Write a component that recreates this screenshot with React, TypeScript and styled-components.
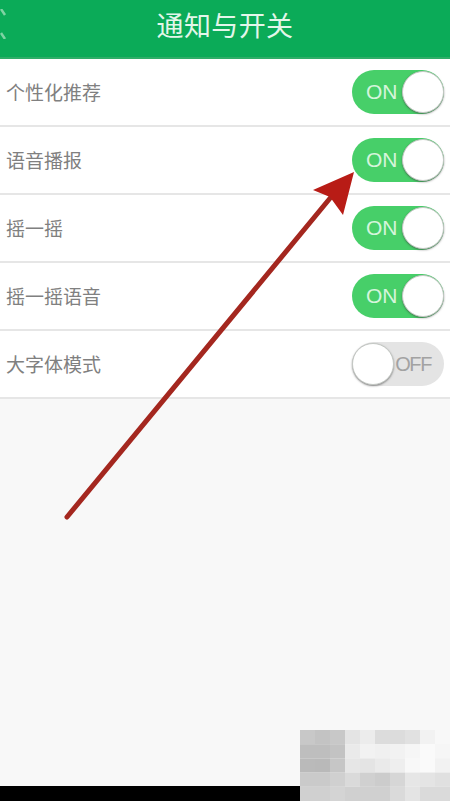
import React from "react"
import styled, { createGlobalStyle } from "styled-components"

const GlobalStyle = createGlobalStyle`
  html, body {
    margin: 0;
    padding: 0;
    background: #f8f8f8;
  }
`

const Screen = styled.div`
  position: relative;
  width: 450px;
  height: 801px;
  overflow: hidden;
  display: flex;
  flex-direction: column;
  background: #f8f8f8;
  font-family: "Liberation Sans", "Noto Sans CJK SC", sans-serif;
`

const Header = styled.header`
  position: relative;
  box-sizing: border-box;
  flex: none;
  height: 59px;
  padding-bottom: 9px;
  display: flex;
  align-items: center;
  justify-content: center;
  background: #0bab58;
  border-bottom: 2px solid #2fae68;
  color: #e3f6ea;
  font-size: 27px;
  letter-spacing: 0.4px;
`

const BackMark = styled.svg`
  position: absolute;
  left: 0;
  top: 9px;
`

const List = styled.ul`
  list-style: none;
  margin: 0;
  padding: 0;
  background: #fff;
`

const Row = styled.li`
  box-sizing: border-box;
  height: 68px;
  padding: 0 6px;
  display: flex;
  align-items: center;
  justify-content: space-between;
  border-bottom: 2px solid #e6e6e6;
  color: #808080;
  font-size: 19px;
`

const Label = styled.span`
  padding-bottom: 2px;
`

const Track = styled.div<{ $on: boolean }>`
  box-sizing: border-box;
  width: 92px;
  height: 44px;
  border-radius: 22px;
  display: flex;
  flex-direction: ${p => (p.$on ? "row" : "row-reverse")};
  align-items: center;
  justify-content: space-between;
  background: ${p => (p.$on ? "#47cf69" : "#e4e4e4")};
  color: ${p => (p.$on ? "#d5f5dc" : "#a2a2a2")};
  font-size: ${p => (p.$on ? "21px" : "20px")};
  letter-spacing: ${p => (p.$on ? "0" : "-1.4px")};
  padding: ${p => (p.$on ? "0 0 0 14px" : "0 13px 0 0")};
`

const Knob = styled.span`
  box-sizing: border-box;
  width: 42px;
  height: 42px;
  border-radius: 50%;
  background: #fff;
  border: 1px solid #c4c8c4;
  box-shadow: 0 1px 2px rgba(60, 60, 60, 0.55);
`

const Arrow = styled.svg`
  position: absolute;
  left: 0;
  top: 0;
  pointer-events: none;
`

const BottomBar = styled.div`
  position: absolute;
  left: 0;
  bottom: 0;
  width: 300px;
  height: 15px;
  background: #000;
`

const Mosaic = styled.svg`
  position: absolute;
  left: 300px;
  top: 730px;
`

const settings = [
  { label: "个性化推荐", on: true },
  { label: "语音播报", on: true },
  { label: "摇一摇", on: true },
  { label: "摇一摇语音", on: true },
  { label: "大字体模式", on: false },
]

// grey levels of the blurred corner, row by row
const mosaicCells = [
  [200, 195, 200, 228, 236, 220, 220, 225, 242, 248],
  [190, 190, 195, 234, 242, 240, 242, 246, 250, 246],
  [186, 185, 198, 230, 228, 234, 238, 248, 250, 242],
  [202, 202, 208, 218, 208, 204, 214, 230, 228, 224],
  [208, 208, 212, 208, 208, 208, 218, 228, 218, 218],
]

export default function App() {
  return (
    <Screen>
      <GlobalStyle />
      <Header>
        <BackMark width="7" height="30" viewBox="0 0 7 30">
          <path d="M1 0 L5 6 M1 24 L5 30" stroke="#7fd3a3" strokeWidth="2.5" fill="none" />
        </BackMark>
        通知与开关
      </Header>
      <List>
        {settings.map(item => (
          <Row key={item.label}>
            <Label>{item.label}</Label>
            <Track $on={item.on}>
              <span>{item.on ? "ON" : "OFF"}</span>
              <Knob />
            </Track>
          </Row>
        ))}
      </List>
      <Arrow width="450" height="801" viewBox="0 0 450 801">
        <path d="M67 517 L336 191" stroke="#a4271f" strokeWidth="5" strokeLinecap="round" fill="none" />
        <path d="M354 172 L313 190 L330 197 L343 215 Z" fill="#b81c16" />
      </Arrow>
      <BottomBar />
      <Mosaic width="150" height="71" viewBox="0 0 150 71">
        {mosaicCells.map((row, y) =>
          row.map((g, x) => (
            <rect key={`${x}-${y}`} x={x * 15} y={y * 14.2} width="15" height="14.2" fill={`rgb(${g},${g},${g})`} />
          ))
        )}
      </Mosaic>
    </Screen>
  )
}
